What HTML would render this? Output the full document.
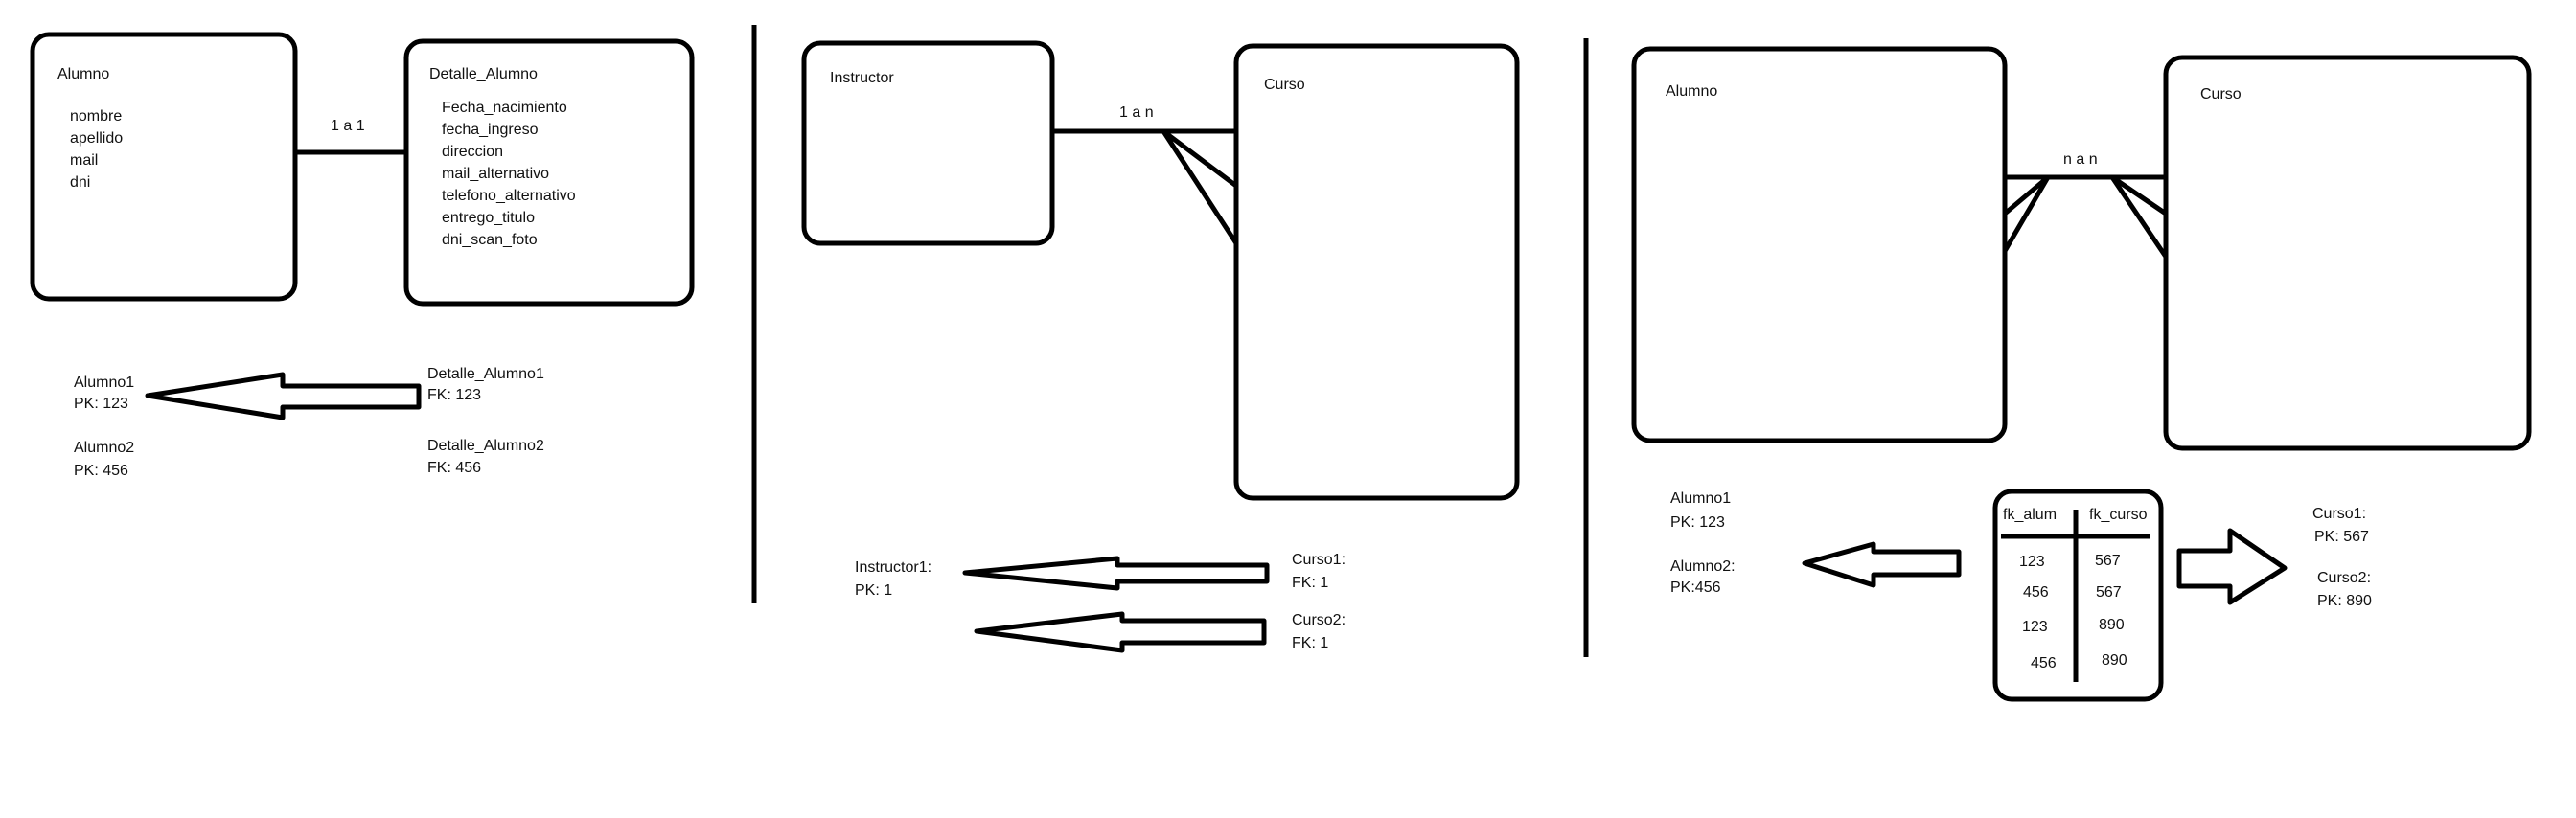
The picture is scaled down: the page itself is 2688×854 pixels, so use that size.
<!DOCTYPE html>
<html><head><meta charset="utf-8"><style>
html,body{margin:0;padding:0;background:#fff;}
svg{display:block;}
text{font-family:"Liberation Sans",sans-serif;font-size:16px;fill:#111;dominant-baseline:middle;}
</style></head><body>
<svg width="2688" height="854" viewBox="0 0 2688 854" xmlns="http://www.w3.org/2000/svg">
<g fill="none" stroke="#000" stroke-width="5" stroke-linejoin="round">
<!-- section 1 -->
<rect x="34" y="36" width="274" height="276" rx="17"/>
<rect x="424" y="43" width="298" height="274" rx="17"/>
<line x1="308" y1="159" x2="424" y2="159"/>
<polygon points="154,413 295,391 295,403 437,403 437,425 295,425 295,436"/>
<line x1="787" y1="26" x2="787" y2="630"/>
<!-- section 2 -->
<rect x="839" y="45" width="259" height="209" rx="17"/>
<rect x="1290" y="48" width="293" height="472" rx="17"/>
<line x1="1098" y1="137" x2="1290" y2="137"/>
<polyline points="1290,194 1214,137 1290,254"/>
<polygon points="1007,598 1166,583 1166,590 1322,590 1322,607 1166,607 1166,614"/>
<polygon points="1019,659 1171,641 1171,648 1319,648 1319,671 1171,671 1171,679"/>
<line x1="1655" y1="40" x2="1655" y2="686"/>
<!-- section 3 -->
<rect x="1705" y="51" width="387" height="409" rx="17"/>
<rect x="2260" y="60" width="379" height="408" rx="17"/>
<line x1="2092" y1="185" x2="2260" y2="185"/>
<polyline points="2092,223 2137,185 2092,262"/>
<polyline points="2260,223 2204,185 2260,268"/>
<rect x="2082" y="513" width="173" height="217" rx="17"/>
<line x1="2088" y1="560" x2="2243" y2="560"/>
<line x1="2166" y1="532" x2="2166" y2="712"/>
<polygon points="1883,588 1955,568 1955,576 2044,576 2044,600 1955,600 1955,611"/>
<polygon points="2274,575 2327,575 2327,554 2384,593 2327,629 2327,612 2274,612"/>
</g>
<!-- text section 1 -->
<text x="60" y="78">Alumno</text>
<text x="73" y="122">nombre</text>
<text x="73" y="145">apellido</text>
<text x="73" y="168">mail</text>
<text x="73" y="191">dni</text>
<text x="448" y="78">Detalle_Alumno</text>
<text x="461" y="113">Fecha_nacimiento</text>
<text x="461" y="136">fecha_ingreso</text>
<text x="461" y="159">direccion</text>
<text x="461" y="182">mail_alternativo</text>
<text x="461" y="205">telefono_alternativo</text>
<text x="461" y="228">entrego_titulo</text>
<text x="461" y="251">dni_scan_foto</text>
<text x="345" y="132">1 a 1</text>
<text x="77" y="400">Alumno1</text>
<text x="77" y="422">PK: 123</text>
<text x="77" y="468">Alumno2</text>
<text x="77" y="492">PK: 456</text>
<text x="446" y="391">Detalle_Alumno1</text>
<text x="446" y="413">FK: 123</text>
<text x="446" y="466">Detalle_Alumno2</text>
<text x="446" y="489">FK: 456</text>
<!-- text section 2 -->
<text x="866" y="82">Instructor</text>
<text x="1319" y="89">Curso</text>
<text x="1168" y="118">1 a n</text>
<text x="892" y="593">Instructor1:</text>
<text x="892" y="617">PK: 1</text>
<text x="1348" y="585">Curso1:</text>
<text x="1348" y="609">FK: 1</text>
<text x="1348" y="648">Curso2:</text>
<text x="1348" y="672">FK: 1</text>
<!-- text section 3 -->
<text x="1738" y="96">Alumno</text>
<text x="2296" y="99">Curso</text>
<text x="2153" y="167">n a n</text>
<text x="2090" y="538">fk_alum</text>
<text x="2180" y="538">fk_curso</text>
<text x="2107" y="587">123</text><text x="2186" y="586">567</text>
<text x="2111" y="619">456</text><text x="2187" y="619">567</text>
<text x="2110" y="655">123</text><text x="2190" y="653">890</text>
<text x="2119" y="693">456</text><text x="2193" y="690">890</text>
<text x="1743" y="521">Alumno1</text>
<text x="1743" y="546">PK: 123</text>
<text x="1743" y="592">Alumno2:</text>
<text x="1743" y="614">PK:456</text>
<text x="2413" y="537">Curso1:</text>
<text x="2415" y="561">PK: 567</text>
<text x="2418" y="604">Curso2:</text>
<text x="2418" y="628">PK: 890</text>
</svg>
</body></html>
